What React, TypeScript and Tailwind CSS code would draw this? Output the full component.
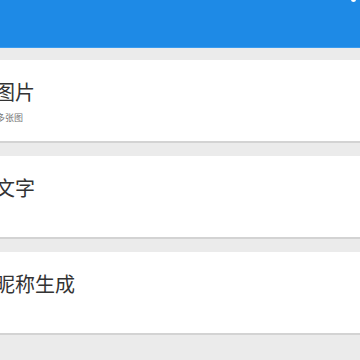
export default function App() {
  const items = [
    { title: "图片", sub: "多张图" },
    { title: "文字", sub: "" },
    { title: "昵称生成", sub: "" },
  ];

  return (
    <div
      className="w-[360px] h-[360px] overflow-hidden bg-[#ebebeb] relative"
      style={{ fontFamily: '"Noto Sans CJK SC", "Noto Sans", sans-serif' }}
    >
      {/* header */}
      <div className="h-[48px] bg-[#1e8ae6] border-b border-[#3a9bef] relative">
        <span className="absolute right-[4px] top-[-3px] w-[5px] h-[5px] rounded-full bg-white" />
      </div>

      <div className="flex flex-col gap-[12px] pt-[12px]">
        {items.map((it, i) => (
          <div
            key={it.title}
            className={
              i === 0
                ? "h-[83px] bg-white border-b-2 border-[#d3d3d3] pt-[19px]"
                : "h-[83px] bg-white border-b-2 border-[#d3d3d3] pt-[19px] mt-[1px]"
            }
          >
            <div className="ml-[-5px] text-[20px] leading-[26px] text-[#333333]">
              {it.title}
            </div>
            {it.sub && (
              <div className="ml-[-4px] mt-[7px] text-[9px] leading-[12px] text-[#777777]">
                {it.sub}
              </div>
            )}
          </div>
        ))}
      </div>
    </div>
  );
}
